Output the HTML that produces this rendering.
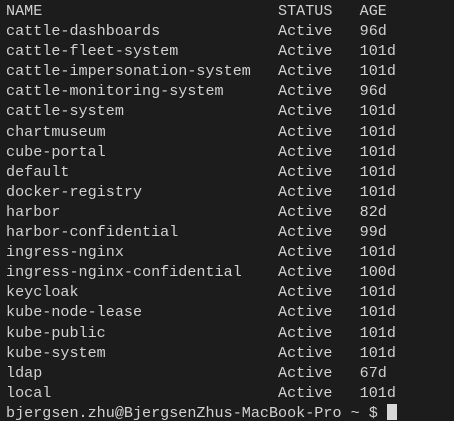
<!DOCTYPE html>
<html><head><style>
html,body{margin:0;padding:0;background:#1c1c1c;width:454px;height:421px;overflow:hidden}
pre{margin:0;padding:1px 0 0 6px;font-family:"Liberation Mono",monospace;font-size:15.1px;letter-spacing:0.01px;line-height:20.1px;color:#d2d2d2}
.c{display:inline-block;width:10px;height:16px;background:#d8d8d8;vertical-align:-3px}
</style></head><body><pre>NAME                          STATUS   AGE
cattle-dashboards             Active   96d
cattle-fleet-system           Active   101d
cattle-impersonation-system   Active   101d
cattle-monitoring-system      Active   96d
cattle-system                 Active   101d
chartmuseum                   Active   101d
cube-portal                   Active   101d
default                       Active   101d
docker-registry               Active   101d
harbor                        Active   82d
harbor-confidential           Active   99d
ingress-nginx                 Active   101d
ingress-nginx-confidential    Active   100d
keycloak                      Active   101d
kube-node-lease               Active   101d
kube-public                   Active   101d
kube-system                   Active   101d
ldap                          Active   67d
local                         Active   101d
bjergsen.zhu@BjergsenZhus-MacBook-Pro ~ $ <span class="c"></span></pre></body></html>
